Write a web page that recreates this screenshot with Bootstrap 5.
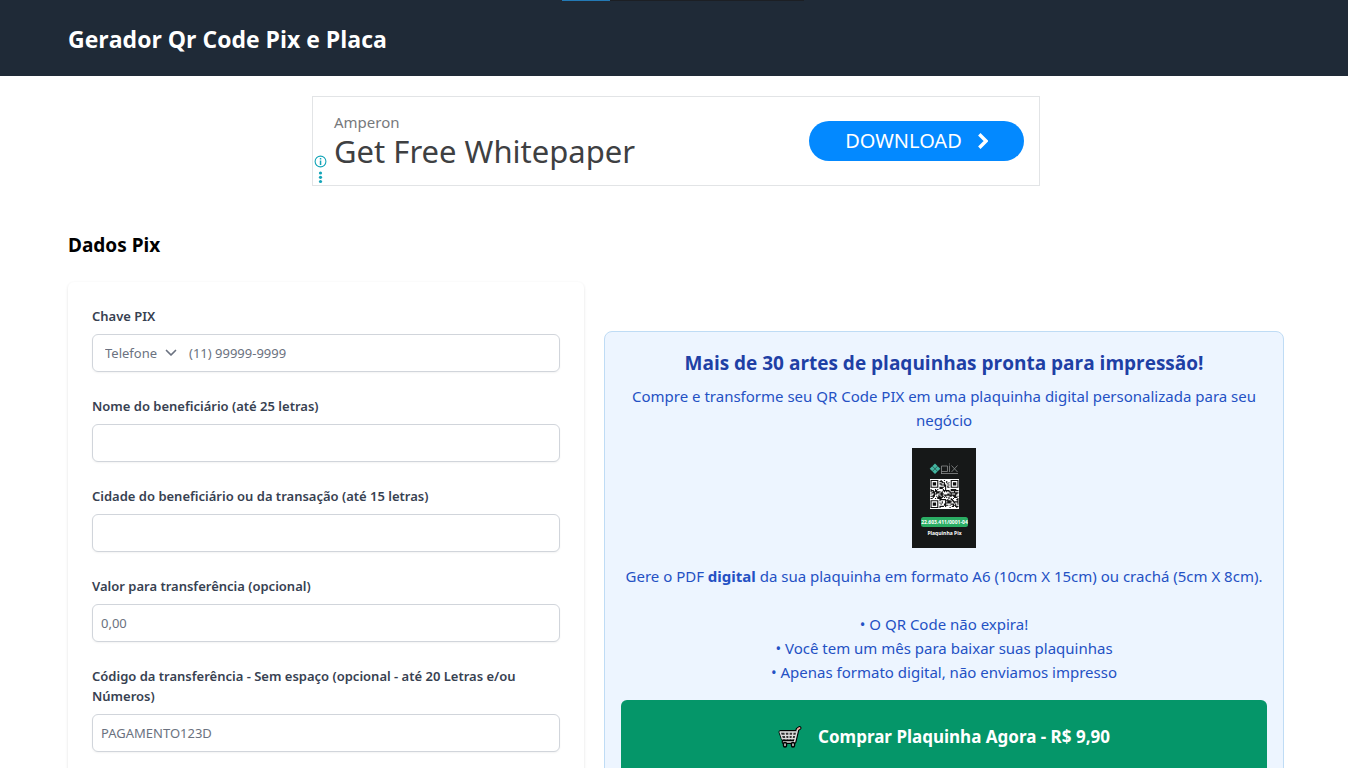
<!DOCTYPE html>
<html lang="pt-BR">
<head>
<meta charset="utf-8">
<meta name="viewport" content="width=device-width, initial-scale=1">
<title>Gerador Qr Code Pix e Placa</title>
<link href="https://cdn.jsdelivr.net/npm/bootstrap@5.3.0/dist/css/bootstrap.min.css" rel="stylesheet">
<style>
body{font-family:"Noto Sans","Open Sans",sans-serif;font-size:15px;line-height:24px;color:#000}
.page-x{padding-left:68px;padding-right:64px}
.site-header{background:#1f2a37;height:76px;padding-top:2px}
.site-header h1{font-family:"Open Sans",sans-serif;font-size:23px;line-height:32px;font-weight:700}
.load-track{position:absolute;top:0;left:18px;right:0;margin:auto;width:18%;height:1px;background:#1c1f24}
.load-track span{display:block;width:20%;height:1px;background:#2379b5}
.ad-box{width:728px;max-width:100%;height:90px;margin:20px auto 0;left:2px;border:1px solid #e2e4e6;padding:0 15px 0 21px}
.ad-name{font-size:15px;line-height:20px;color:#77797c}
.ad-title{font-size:31px;line-height:38px;color:#3e4042}
.ad-btn{width:215px;height:40px;background:#0389ff;color:#fff;font-size:20px;line-height:24px}
.ad-btn:hover{background:#0389ff;color:#fff}
.ad-marks{position:absolute;left:1px;bottom:0}
h2.section-title{font-size:19px;line-height:28px;font-weight:700;margin:45px 0 23px}
.main-grid{display:grid;grid-template-columns:minmax(0,129fr) minmax(0,170fr);gap:20px}
.form-box{padding:24px;border-radius:6px;box-shadow:0 1px 3px rgba(0,0,0,.12);min-height:520px}
.field{margin-bottom:24px}
.field label.caption{display:block;font-size:13px;line-height:20px;font-weight:600;color:#374151;margin-bottom:8px}
.box{height:38px;border:1px solid #d1d5db;border-radius:6px;font-size:13px;line-height:20px;padding:8px;color:#6b7280;box-shadow:0 1px 2px rgba(0,0,0,.05)}
.box::placeholder,.bare::placeholder{color:#6b7280;opacity:1}
.bare{border:0;background:transparent;color:#6b7280;outline:0;min-width:0;padding:0}
.box select{appearance:none;width:76px;margin-left:4px}
.chev{margin-left:-16px;margin-right:12px;pointer-events:none}
.promo{margin-top:49px;background:#edf5ff;border:1px solid #bfdcf5;border-radius:8px;padding:16px;color:#2451c4}
.promo h3{font-family:"Open Sans",sans-serif;font-size:19px;line-height:28px;font-weight:700;color:#1e40a5;margin:1px 0 7px}
.plaque{display:block;margin:16px auto}
.buy{height:74px;background:#059669;color:#fff;font-size:17px;font-weight:700;border-radius:6px;margin-top:16px;gap:16px}
.buy:hover{background:#047857;color:#fff}
</style>
</head>
<body>
<header class="site-header page-x position-relative d-flex align-items-center">
<div class="load-track"><span></span></div>
<h1 class="m-0 text-white">Gerador Qr Code Pix e Placa</h1>
</header>
<aside class="ad-box position-relative d-flex align-items-center justify-content-between">
<div><div class="ad-name">Amperon</div><div class="ad-title">Get Free Whitepaper</div></div>
<button type="button" class="ad-btn btn rounded-pill d-flex align-items-center justify-content-center gap-3 p-0">DOWNLOAD
<svg width="10" height="16" viewBox="0 0 10 16" fill="none" stroke="#fff" stroke-width="3.4"><path d="M1.3 1.3 8 8l-6.700 6.700"/></svg></button>
<svg class="ad-marks" width="13" height="30" viewBox="0 0 13 30" fill="#14a5b8"><circle cx="6.500" cy="6.500" r="5.400" fill="none" stroke="#14a5b8" stroke-width="1.100"/><path d="M5.800 3h1.500v1.500H5.800zM5.800 5.500h1.500v4.500H5.800z"/><circle cx="6.500" cy="18" r="1.600"/><circle cx="6.500" cy="22.300" r="1.600"/><circle cx="6.500" cy="26.500" r="1.600"/></svg>
</aside>
<main class="page-x">
<h2 class="section-title">Dados Pix</h2>
<div class="main-grid align-items-start">
<form class="form-box">
<div class="field"><label class="caption" for="chave">Chave PIX</label>
<div class="box d-flex align-items-center">
<select class="bare" aria-label="Tipo de chave"><option>Telefone</option><option>CPF</option><option>E-mail</option></select>
<svg class="chev flex-shrink-0" width="12" height="8" viewBox="0 0 12 8" fill="none" stroke="#6b7280" stroke-width="1.700" stroke-linecap="round" stroke-linejoin="round"><path d="m1.500 1.500 4.500 4.500 4.500-4.500"/></svg>
<input class="bare flex-grow-1" id="chave" type="text" placeholder="(11) 99999-9999"></div></div>
<div class="field"><label class="caption" for="nome">Nome do beneficiário (até 25 letras)</label><input class="box w-100" id="nome" type="text"></div>
<div class="field"><label class="caption" for="cidade">Cidade do beneficiário ou da transação (até 15 letras)</label><input class="box w-100" id="cidade" type="text"></div>
<div class="field"><label class="caption" for="valor">Valor para transferência (opcional)</label><input class="box w-100" id="valor" type="text" placeholder="0,00"></div>
<div class="field"><label class="caption" for="codigo">Código da transferência - Sem espaço (opcional - até 20 Letras e/ou Números)</label><input class="box w-100" id="codigo" type="text" placeholder="PAGAMENTO123D"></div>
</form>
<section class="promo text-center">
<h3>Mais de 30 artes de plaquinhas pronta para impressão!</h3>
<p class="m-0">Compre e transforme seu QR Code PIX em uma plaquinha digital personalizada para seu negócio</p>
<svg class="plaque" width="64" height="100" viewBox="0 0 64 100" font-family="Open Sans, sans-serif" font-weight="700" text-anchor="middle">
<path fill="#161818" d="M0 0h64v100H0z"/>
<path fill="#43b5a0" d="m23 15.500 5.300 5.300-5.300 5.300-5.300-5.300z"/><path d="m20.300 18.100 5.400 5.400m0-5.400-5.400 5.400" stroke="#161818" stroke-width=".5"/>
<path fill="none" stroke="#8b8e8e" stroke-width=".8" d="M29.500 26v-8h6v5.500h-6M37.500 17.500V24M39.500 17.500l6 6.500m0-6.500-6 6.500M29 25.500h17M37.500 15.500v1"/>
<path fill="#fff" d="M18 31h29v30H18z"/><path id="qr" fill="#111"/>
<rect x="9" y="69" width="47" height="10" rx="2.500" fill="#2bad64"/>
<text x="32.500" y="76" font-size="5" fill="#fff">22.603.411/0001-04</text>
<text x="32.500" y="87" font-size="5" fill="#fff">Plaquinha Pix</text>
</svg>
<p class="m-0">Gere o PDF <strong>digital</strong> da sua plaquinha em formato A6 (10cm X 15cm) ou crachá (5cm X 8cm).</p>
<br>
<p class="m-0">• O QR Code não expira!<br>• Você tem um mês para baixar suas plaquinhas<br>• Apenas formato digital, não enviamos impresso</p>
<button type="button" class="buy btn w-100 d-flex align-items-center justify-content-center">
<svg width="24" height="24" viewBox="0 0 24 24" fill="none" stroke-linecap="round" stroke-linejoin="round"><path stroke="#000" stroke-width="3.800" d="m21.500 3-2 1.500L16.500 17H5.500M2.500 7H18l-2 7H5z"/><path fill="#333" d="M2 6h16.500l-2 8.500H4.500z"/><path stroke="#ddd" stroke-width="1.300" d="M2 7h16M3 10.300h14.500M4 13.700h12.500M2 7l2.500 7M7 7l1 7M11 7v7M15 7l-1 7"/><path stroke="#ddd" stroke-width="1.500" d="m19.500 4.500-3 12.500h-11"/><path stroke="#f0aa9c" stroke-width="2" d="m21.500 3-1.500 1"/><g fill="#ddd" stroke="#000" stroke-width="1.500"><rect x="5.500" y="17.500" width="3" height="4.500" rx="1.500"/><rect x="13.500" y="17.500" width="3" height="4.500" rx="1.500"/></g></svg>
Comprar Plaquinha Agora - R$ 9,90</button>
</section>
</div>
</main>
<script src="https://cdn.jsdelivr.net/npm/bootstrap@5.3.0/dist/js/bootstrap.bundle.min.js"></script>
<script>
// Draws the 25 x 25 modules of the sample code on the plaque
(() => {
  const n = 25, s = 1.12; let d = "", seed = 7;
  const finder = (x, y) => {
    for (const [a, b] of [[0, 0], [n - 7, 0], [0, n - 7]]) {
      const u = x - a, v = y - b;
      if (u >= -1 && u <= 7 && v >= -1 && v <= 7) {
        const r = Math.max(Math.abs(u - 3), Math.abs(v - 3));
        return r === 3 || r < 2;
      }
    }
    return null;
  };
  for (let y = 0; y < n; y++) for (let x = 0; x < n; x++) {
    seed = (seed * 1103515245 + 12345) % 2147483648;
    const f = finder(x, y);
    if (f === null ? seed / 2147483648 > 0.45 : f) d += `M${18.5 + x * s} ${32 + y * s}h${s}v${s}h-${s}z`;
  }
  document.getElementById("qr").setAttribute("d", d);
})();
</script>
</body>
</html>
